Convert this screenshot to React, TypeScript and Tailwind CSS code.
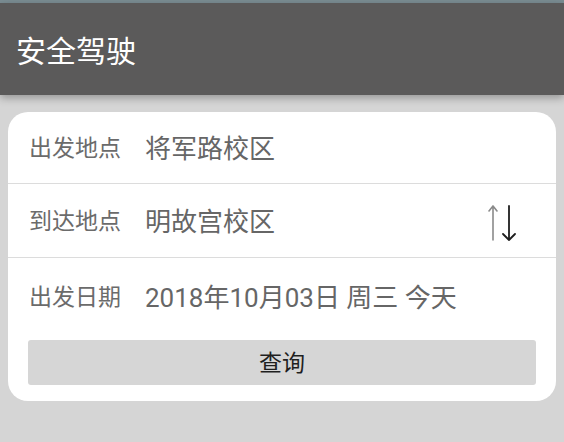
import React from 'react';

const font = { fontFamily: 'Roboto, "Noto Sans CJK SC", sans-serif' };

const SwapIcon: React.FC = () => (
  <svg width="34" height="38" viewBox="0 0 34 38" fill="none">
    <path d="M5 36V2M1 7l4-5 4 5" stroke="#8a8a8a" strokeWidth="1.6" strokeLinecap="round" strokeLinejoin="round" />
    <path d="M21 2v34M15 30l6 6 6-6" stroke="#1e1e1e" strokeWidth="1.8" strokeLinecap="round" strokeLinejoin="round" />
  </svg>
);

interface RowProps {
  label: string;
  value: string;
  className?: string;
  right?: React.ReactNode;
}

const Row: React.FC<RowProps> = ({ label, value, className, right }) => (
  <div className={`flex items-center pl-[21px] pr-[34px] ${className ?? ''}`}>
    <span className="w-[116px] shrink-0 text-[23px] text-[#6b6b6b]">{label}</span>
    <span className="flex-1 text-[26px] text-[#666666] whitespace-nowrap">{value}</span>
    {right}
  </div>
);

export default function App() {
  return (
    <div className="w-[564px] h-[442px] bg-[#d5d5d5] overflow-hidden" style={font}>
      <div className="h-[3px] bg-[#7b8d93]" />
      <header className="relative z-10 h-[92px] bg-[#5b5a5a] flex items-center pl-4 shadow-[0_3px_8px_rgba(0,0,0,0.3)]">
        <h1 className="text-[30px] text-white leading-none pt-[5px]">安全驾驶</h1>
      </header>

      <main className="px-2 pt-[17px]">
        <div className="bg-white rounded-[20px] overflow-hidden">
          <Row label="出发地点" value="将军路校区" className="h-[72px] pt-[3px] border-b border-[#dcdcdc]" />
          <Row
            label="到达地点"
            value="明故宫校区"
            className="h-[74px] pt-[4px] border-b border-[#dcdcdc]"
            right={<SwapIcon />}
          />
          <Row label="出发日期" value="2018年10月03日 周三 今天" className="h-[77px] pt-[4px]" />
          <div className="px-5 pt-[5px] pb-[16px]">
            <button className="w-full h-[45px] rounded-[3px] bg-[#d6d6d6] text-[23px] text-[#1f1f1f] pt-[3px]">
              查询
            </button>
          </div>
        </div>
      </main>
    </div>
  );
}
